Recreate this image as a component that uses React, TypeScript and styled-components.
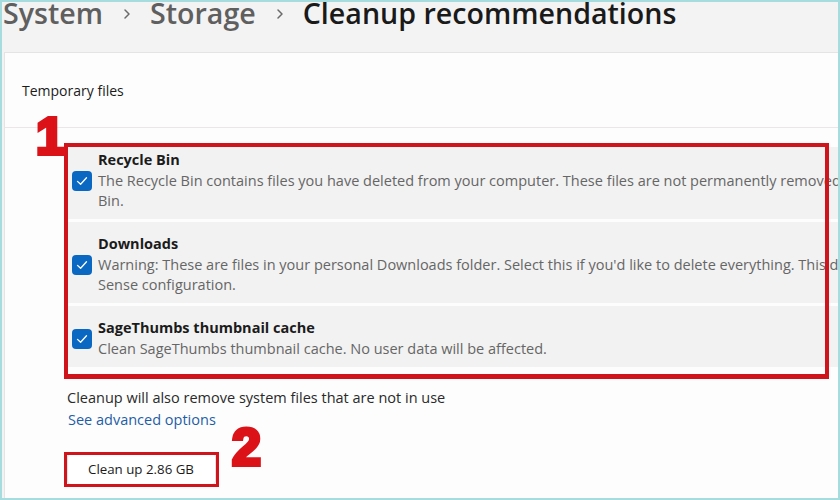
import React from "react";
import styled, { createGlobalStyle } from "styled-components";

const GlobalStyle = createGlobalStyle`
  html, body { margin: 0; padding: 0; background: #ffffff; }
  * { box-sizing: border-box; }
`;

const Frame = styled.div`
  width: 840px;
  height: 500px;
  border: 2px solid #a6dcdd;
  background: #f3f3f3;
  overflow: hidden;
  display: flex;
  flex-direction: column;
  font-family: "Open Sans", "Noto Sans", sans-serif;
  color: #1b1b1b;
`;

const Header = styled.header`
  height: 50px;
  flex: none;
  display: flex;
  align-items: flex-start;
  padding-left: 1px;
`;

const Crumbs = styled.h1`
  margin: -3px 0 0;
  display: flex;
  align-items: center;
  font-size: 28.6px;
  line-height: 28px;
  font-weight: 600;
  white-space: nowrap;
`;

const Crumb = styled.span<{ $current?: boolean }>`
  color: ${(p) => (p.$current ? "#1a1a1a" : "#5f5f5f")};
`;

const Chevron = styled.svg`
  width: 8px;
  height: 12px;
  margin: 2px 19px 0 20px;
  flex: none;
`;

const Card = styled.section`
  flex: 1;
  margin-left: 2px;
  background: #fdfdfd;
  border-top: 1px solid #e4e4e4;
  border-left: 1px solid #e4e4e4;
  overflow: hidden;
  display: flex;
  flex-direction: column;
`;

const CardHeader = styled.div`
  height: 75px;
  flex: none;
  display: flex;
  align-items: center;
  padding-left: 17px;
  border-bottom: 1px solid #ebe7e8;
  font-size: 14px;
`;

const CardBody = styled.div`
  padding: 19px 0 0 62px;
  display: flex;
  flex-direction: column;
  align-items: flex-start;
`;

const List = styled.div`
  position: relative;
  align-self: stretch;
  display: flex;
  flex-direction: column;
  gap: 3px;
`;

const RedFrame = styled.div`
  position: absolute;
  border: 4px solid #d0141c;
  pointer-events: none;
`;

const ListFrame = styled(RedFrame)`
  left: -3px;
  top: -4px;
  width: 765px;
  bottom: -12px;
  border-bottom-width: 5px;
`;

const ButtonFrame = styled(RedFrame)`
  left: -3px;
  right: -3px;
  top: -1px;
  bottom: -2px;
  border-width: 3px;
`;

const Marker = styled.span`
  position: absolute;
  font-family: "Liberation Sans", Arial, sans-serif;
  font-weight: 700;
  font-size: 52px;
  line-height: 52px;
  color: #dc1219;
  -webkit-text-stroke: 4px #dc1219;
  pointer-events: none;
`;

const Row = styled.div<{ $top: number }>`
  display: flex;
  align-items: center;
  padding: ${(p) => p.$top}px 0 8px 5px;
  background: #f2f2f2;
`;

const Check = styled.span`
  width: 20px;
  height: 20px;
  flex: none;
  border-radius: 4px;
  background: #0b68c2;
  display: flex;
  align-items: center;
  justify-content: center;
  margin-right: 6px;
`;

const RowText = styled.div`
  display: flex;
  flex-direction: column;
  white-space: nowrap;
`;

const RowTitle = styled.div`
  font-size: 14.5px;
  line-height: 20px;
  font-weight: 700;
  color: #1b1b1b;
  margin-bottom: 1px;
`;

const RowDesc = styled.div`
  font-size: 14.5px;
  line-height: 20px;
  color: #666666;
`;

const Note = styled.div`
  margin-top: 21px;
  font-size: 14.5px;
  line-height: 20px;
  color: #2a2a2a;
`;

const Link = styled.a`
  margin-top: 2px;
  margin-left: 1px;
  font-size: 14.5px;
  line-height: 20px;
  color: #1f5ea6;
  text-decoration: none;
`;

const ButtonWrap = styled.div`
  position: relative;
  margin-top: 23px;
`;

const Button = styled.button`
  height: 32px;
  padding: 0 21px 0 20px;
  background: #ffffff;
  border: 1px solid #e3e3e3;
  border-radius: 4px;
  font-family: "Open Sans", "Noto Sans", sans-serif;
  font-size: 13.3px;
  color: #1b1b1b;
`;

const rows = [
  {
    title: "Recycle Bin",
    top: 3,
    lines: [
      "The Recycle Bin contains files you have deleted from your computer. These files are not permanently removed until you empty the Recycle",
      "Bin.",
    ],
  },
  {
    title: "Downloads",
    top: 12,
    lines: [
      "Warning: These are files in your personal Downloads folder. Select this if you'd like to delete everything. This does not respect your Storage",
      "Sense configuration.",
    ],
  },
  {
    title: "SageThumbs thumbnail cache",
    top: 12,
    lines: ["Clean SageThumbs thumbnail cache. No user data will be affected."],
  },
];

const CheckMark = () => (
  <svg width="14" height="14" viewBox="0 0 14 14" fill="none">
    <polyline
      points="2.5,7.4 5.6,10.3 11.5,3.8"
      stroke="#ffffff"
      strokeWidth="1.3"
      strokeLinecap="round"
      strokeLinejoin="round"
    />
  </svg>
);

const Sep = () => (
  <Chevron viewBox="0 0 8 12" fill="none">
    <polyline points="2,2 6,6 2,10" stroke="#6a6a6a" strokeWidth="1.5" strokeLinecap="round" strokeLinejoin="round" />
  </Chevron>
);

export default function App() {
  return (
    <>
      <GlobalStyle />
      <Frame>
        <Header>
          <Crumbs>
            <Crumb>System</Crumb>
            <Sep />
            <Crumb>Storage</Crumb>
            <Sep />
            <Crumb $current>Cleanup recommendations</Crumb>
          </Crumbs>
        </Header>
        <Card>
          <CardHeader>Temporary files</CardHeader>
          <CardBody>
            <List>
              {rows.map((r) => (
                <Row key={r.title} $top={r.top}>
                  <Check>
                    <CheckMark />
                  </Check>
                  <RowText>
                    <RowTitle>{r.title}</RowTitle>
                    {r.lines.map((l, i) => (
                      <RowDesc key={i}>{l}</RowDesc>
                    ))}
                  </RowText>
                </Row>
              ))}
              <ListFrame />
              <Marker style={{ left: -31, top: -37 }}>1</Marker>
            </List>
            <Note>Cleanup will also remove system files that are not in use</Note>
            <Link href="#">See advanced options</Link>
            <ButtonWrap>
              <Button>Clean up 2.86 GB</Button>
              <ButtonFrame />
              <Marker style={{ left: 165, top: -32 }}>2</Marker>
            </ButtonWrap>
          </CardBody>
        </Card>
      </Frame>
    </>
  );
}
